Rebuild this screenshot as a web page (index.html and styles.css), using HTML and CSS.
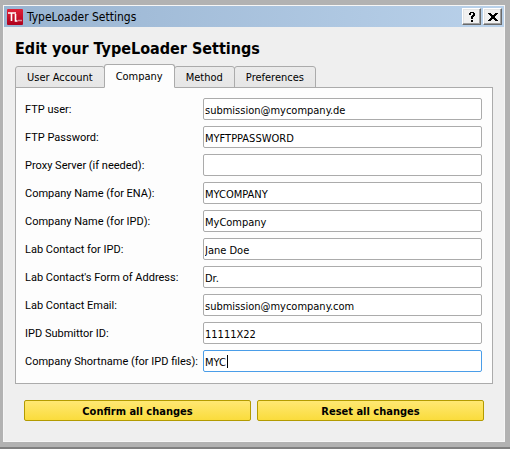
FILE: index.html
```html
<!DOCTYPE html>
<html lang="en">
<head>
<meta charset="utf-8">
<title>TypeLoader Settings</title>
<link rel="stylesheet" href="styles.css">
</head>
<body>
<main class="window">
  <header class="titlebar">
    <svg class="logo" viewBox="0 0 16 16" aria-hidden="true">
      <defs><linearGradient id="red" x1="0" y1="0" x2="0" y2="1"><stop offset="0" stop-color="#df2037"/><stop offset="1" stop-color="#ad001c"/></linearGradient></defs>
      <rect width="16" height="16" rx="1" fill="url(#red)"/>
      <path d="M1 4h8M4.500 4v8M8.500 5v7h2M11.500 11.500h1M13.500 11.500h1" fill="none" stroke="#fff" stroke-width="1.600"/>
    </svg>
    <span class="caption">TypeLoader Settings</span>
    <button class="control" type="button" aria-label="Help">
      <svg viewBox="0 0 12 12" shape-rendering="crispEdges"><path d="M4 1h4v1h1v3H8v1H7v2H5V5h1V4h1V2H5v2H3V2h1zM5 9h2v2H5z"/></svg>
    </button>
    <button class="control" type="button" aria-label="Close">
      <svg viewBox="0 0 12 12" shape-rendering="crispEdges"><path d="M1 2h3v1h1v1h2V3h1V2h3v1h-1v1H9v1H8v2h1v1h1v1h1v1H8V9H7V8H5v1H4v1H1V9h1V8h1V7h1V5H3V4H2V3H1z"/></svg>
    </button>
  </header>
  <div class="content">
    <h1>Edit your TypeLoader Settings</h1>
    <div class="tabs" role="tablist">
      <button class="tab" type="button" role="tab">User Account</button>
      <button class="tab active" type="button" role="tab" aria-selected="true">Company</button>
      <button class="tab" type="button" role="tab">Method</button>
      <button class="tab" type="button" role="tab">Preferences</button>
    </div>
    <form class="panel" id="settings">
      <label for="user">FTP user:</label><input id="user" value="submission@mycompany.de">
      <label for="password">FTP Password:</label><input id="password" value="MYFTPPASSWORD">
      <label for="proxy">Proxy Server (if needed):</label><input id="proxy">
      <label for="ena">Company Name (for ENA):</label><input id="ena" value="MYCOMPANY">
      <label for="ipd">Company Name (for IPD):</label><input id="ipd" value="MyCompany">
      <label for="contact">Lab Contact for IPD:</label><input id="contact" value="Jane Doe">
      <label for="address">Lab Contact's Form of Address:</label><input id="address" value="Dr.">
      <label for="email">Lab Contact Email:</label><input id="email" value="submission@mycompany.com">
      <label for="submittor">IPD Submittor ID:</label><input id="submittor" value="11111X22">
      <label for="short">Company Shortname (for IPD files):</label><input id="short" class="current" value="MYC">
    </form>
    <div class="actions">
      <button type="submit" form="settings">Confirm all changes</button>
      <button type="reset" form="settings">Reset all changes</button>
    </div>
  </div>
</main>
</body>
</html>
```
FILE: styles.css
```css
* { box-sizing: border-box; }

body {
  margin: 0;
  min-height: 100vh;
  padding: 5px 5px 5px 3px;
  background: #b2b2b2;
  border-bottom: 2px solid #808080;
  display: flex;
  font: 11px/14px "DejaVu Sans Condensed", sans-serif;
  color: #000;
}

button, input { font: inherit; color: inherit; }

.window {
  flex: 1;
  background: #efefef;
  border: 1px solid #f6f6f6;
}

.titlebar {
  display: flex;
  align-items: center;
  gap: 2px;
  height: 21px;
  padding: 0 2px 0 3px;
  background: linear-gradient(90deg, #99b4d1, #b9d1ea);
}

.logo { width: 16px; height: 16px; }

.caption {
  flex: 1;
  padding-left: 2px;
  font-size: 12px;
}

.control {
  display: grid;
  place-items: center;
  width: 19px;
  height: 17px;
  padding: 0;
  background: #f0f0f0;
  border: 1px solid;
  border-color: #fff #696969 #696969 #fff;
  box-shadow: inset -1px -1px #a0a0a0, inset 1px 1px #e3e3e3;
}

.control svg { width: 12px; height: 12px; }

.content { padding: 11px 11px 16px; }

h1 {
  margin: 0 0 4px;
  font-size: 16px;
  line-height: 22px;
}

.tabs {
  display: flex;
  align-items: flex-end;
  margin-bottom: -1px;
}

.tab {
  height: 22px;
  padding: 2px 11px 0;
  margin-right: -1px;
  background: linear-gradient(#ebebeb, #e6e6e6);
  border: 1px solid #ababab;
  border-radius: 3px 3px 0 0;
}

.tab.active {
  height: 24px;
  z-index: 1;
  background: #fdfdfd;
  border-bottom-color: #fdfdfd;
}

.panel {
  display: grid;
  grid-template-columns: 172px 1fr;
  align-items: center;
  gap: 6px;
  padding: 10px 10px 11px 9px;
  background: #fdfdfd;
  border: 1px solid #ababab;
}

.panel label {
  padding-top: 2px;
  font-family: Roboto, sans-serif;
  white-space: nowrap;
}

.panel input {
  width: 100%;
  min-width: 0;
  height: 22px;
  padding: 2px 1px 0;
  background: #fff;
  border: 1px solid #ababab;
  border-radius: 2px;
  outline: 0;
}

/* Active field with its insertion point */
.panel .current {
  border-color: #4a9de8;
  background: linear-gradient(#000, #000) 23px center / 1px 13px no-repeat #fff;
}

.actions {
  display: grid;
  grid-template-columns: 1fr 1fr;
  gap: 6px;
  padding: 16px 9px 0;
}

.actions button {
  height: 21px;
  padding: 2px 0 0;
  font-weight: bold;
  background: linear-gradient(#ffe873, #fadc3c);
  border: 1px solid #b39b00;
  border-radius: 2px;
}
```
